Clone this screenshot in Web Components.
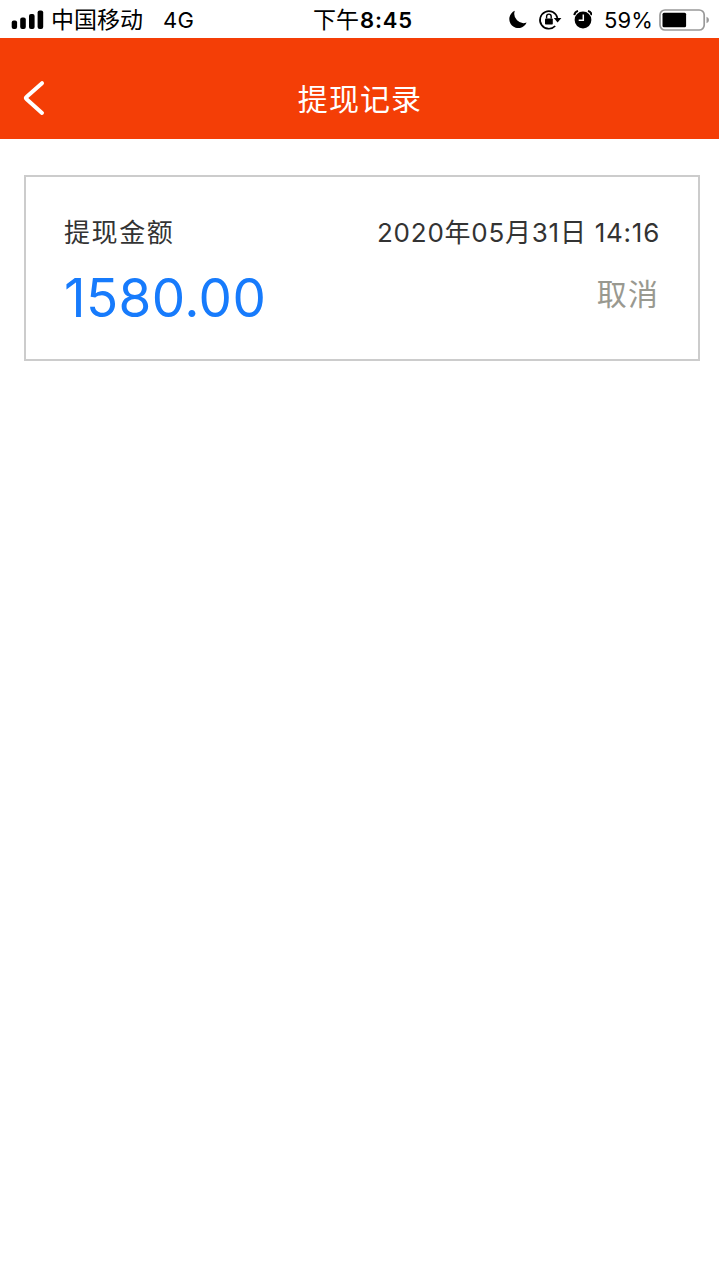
<!DOCTYPE html>
<html lang="zh-CN">
<head>
<meta charset="UTF-8">
<meta name="viewport" content="width=device-width, initial-scale=1">
<title>提现记录</title>
<style>
    body {
        margin: 0;
        min-height: 100vh;
        background: #fff;
        font-family: Inter, 'Noto Sans CJK SC', sans-serif;
    }
</style>
</head>
<body>
<status-bar carrier="中国移动" network="4G" battery="59"><span>下午</span><b>8:45</b></status-bar>
<page-header>提现记录</page-header>
<main>
    <record-card>
        <span slot="label">提现金额</span>
        <span slot="date">2020年05月31日 14:16</span>
        <span slot="amount">1580.00</span>
        <span slot="state">取消</span>
    </record-card>
</main>

<script>
class StatusBar extends HTMLElement {
    constructor() {
        super();
        this.shadowDOM = this.attachShadow({ mode: 'open' });
    }

    connectedCallback() {
        this.render();
    }

    render() {
        const battery = Number(this.getAttribute('battery'));
        this.shadowDOM.innerHTML = `
            <style>
                :host {
                    display: grid;
                    grid-template-columns: 1fr auto 1fr;
                    align-items: center;
                    box-sizing: border-box;
                    height: 38px;
                    padding: 2px 11px 0 11px;
                    color: #000;
                    font-size: 22px;
                    line-height: 36px;
                    white-space: nowrap;
                }

                div {
                    display: flex;
                    align-items: center;
                }

                svg {
                    display: block;
                    flex: none;
                }

                .carrier {
                    margin-left: 7px;
                    font-size: 23px;
                }

                .network {
                    margin-left: 20px;
                    letter-spacing: .3px;
                }

                .time {
                    padding-left: 6px;
                    font-size: 23px;
                }

                ::slotted(b) {
                    margin-left: 1px;
                    font-size: 22px;
                    font-weight: 600;
                    letter-spacing: .9px;
                }

                .right {
                    justify-content: flex-end;
                }

                .percent {
                    margin: 0 6px 0 12px;
                    letter-spacing: .1px;
                }
            </style>

            <div>
                <svg width="33" height="20" viewBox="0 0 33 20">
                    <rect x=".7" y="10.5" width="5.4" height="8.5" rx="2"/>
                    <rect x="9.2" y="7.5" width="5.6" height="11.5" rx="2"/>
                    <rect x="18" y="4" width="5.6" height="15" rx="2"/>
                    <rect x="26.6" y=".5" width="5.6" height="18.5" rx="2"/>
                </svg>
                <span class="carrier">${this.getAttribute('carrier')}</span>
                <span class="network">${this.getAttribute('network')}</span>
            </div>
            <div class="time"><slot></slot></div>
            <div class="right">
                <svg width="84" height="22" viewBox="0 0 84 22">
                    <path d="M6.8 1.8A9 9 0 1 0 18.6 13.6A9.3 9.3 0 0 1 6.8 1.8Z"/>
                    <path d="M47.2 17A8.8 8.8 0 1 1 49.4 9" fill="none" stroke="#000" stroke-width="1.7"/>
                    <path d="M45.8 9h7.6l-3.8 4.6z"/>
                    <rect x="37" y="9.4" width="7.8" height="6.2" rx=".8"/>
                    <path d="M38.6 9.6V7.4a2.3 2.3 0 0 1 4.6 0V9.6" fill="none" stroke="#000" stroke-width="1.4"/>
                    <circle cx="75" cy="11" r="8.4"/>
                    <path d="M66.3 6.2Q66.8 2.8 70 1.9M80 1.9Q83.2 2.8 83.7 6.2" fill="none" stroke="#000" stroke-width="2"/>
                    <path d="M75.3 5.5V11.3H70.7" fill="none" stroke="#fff" stroke-width="1.5"/>
                </svg>
                <span class="percent">${battery}%</span>
                <svg width="50" height="22" viewBox="0 0 50 22">
                    <rect x="1" y="1" width="44.2" height="20" rx="5" fill="none" stroke="#999" stroke-width="1.7"/>
                    <rect x="3.5" y="3.7" width="${40 * battery / 100}" height="14.6" rx="1.5"/>
                    <path d="M47.5 7.8Q50 8.7 50 11T47.5 14.2Z" fill="#999"/>
                </svg>
            </div>
        `;
    }
}

class PageHeader extends HTMLElement {
    constructor() {
        super();
        this.shadowDOM = this.attachShadow({ mode: 'open' });
    }

    connectedCallback() {
        this.render();
    }

    render() {
        this.shadowDOM.innerHTML = `
            <style>
                :host {
                    display: grid;
                    grid-template-columns: 1fr auto 1fr;
                    align-items: center;
                    box-sizing: border-box;
                    height: 101px;
                    margin-right: 1px;
                    padding: 20px 21px 0 22px;
                    background: #f43e06;
                    color: #fff;
                }

                svg {
                    display: block;
                }

                h1 {
                    margin: 0;
                    font-size: 30px;
                    font-weight: 400;
                    line-height: 40px;
                    letter-spacing: 1.1px;
                }
            </style>

            <svg width="24" height="38" viewBox="0 0 24 38">
                <path d="M20 3.2L4.4 17Q3.2 18 4.4 19L20 33" fill="none" stroke="#fff" stroke-width="4" stroke-linecap="round" stroke-linejoin="round"/>
            </svg>
            <h1><slot></slot></h1>
        `;
    }
}

class RecordCard extends HTMLElement {
    constructor() {
        super();
        this.shadowDOM = this.attachShadow({ mode: 'open' });
    }

    connectedCallback() {
        this.render();
    }

    render() {
        this.shadowDOM.innerHTML = `
            <style>
                :host {
                    display: block;
                    box-sizing: border-box;
                    height: 186px;
                    margin: 36px 20px 0 24px;
                    padding: 36px 38px 0;
                    border: 2px solid #ccc;
                    color: #333;
                    font-size: 26px;
                }

                .row {
                    display: flex;
                    justify-content: space-between;
                    line-height: 40px;
                    white-space: nowrap;
                }

                .label {
                    letter-spacing: 1.6px;
                }

                .date {
                    letter-spacing: .75px;
                }

                .amount {
                    color: #177bfc;
                    font-size: 53px;
                    line-height: 90px;
                    letter-spacing: .4px;
                }

                .state {
                    padding-right: 1px;
                    color: #999990;
                    font-size: 30px;
                    line-height: 82px;
                    letter-spacing: 1.1px;
                }

                slot {
                    display: block;
                }
            </style>

            <div class="row">
                <slot class="label" name="label"></slot>
                <slot class="date" name="date"></slot>
            </div>
            <div class="row">
                <slot class="amount" name="amount"></slot>
                <slot class="state" name="state"></slot>
            </div>
        `;
    }
}

customElements.define('status-bar', StatusBar);
customElements.define('page-header', PageHeader);
customElements.define('record-card', RecordCard);
</script>
</body>
</html>
